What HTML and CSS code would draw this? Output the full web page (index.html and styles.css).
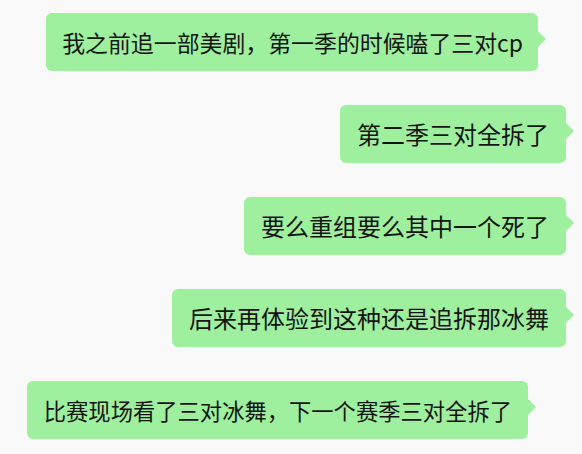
FILE: index.html
```html
<!DOCTYPE html>
<html>
<head>
<meta charset="UTF-8">
<title>聊天记录</title>
<link rel="stylesheet" href="styles.css">
</head>
<body>
<div id="chat">
    <div class="row row-mid">
        <div class="bubble size-m">我之前追一部美剧，第一季的时候嗑了三对cp</div>
    </div>
    <div class="row">
        <div class="bubble">第二季三对全拆了</div>
    </div>
    <div class="row">
        <div class="bubble">要么重组要么其中一个死了</div>
    </div>
    <div class="row">
        <div class="bubble">后来再体验到这种还是追拆那冰舞</div>
    </div>
    <div class="row row-far">
        <div class="bubble size-s">比赛现场看了三对冰舞，下一个赛季三对全拆了</div>
    </div>
</div>
</body>
</html>
```

FILE: styles.css
```css
body {
    margin: 0;
    background-color: #F9F9F9;
    font-family: "Noto Sans CJK SC", "Noto Sans", sans-serif;
}

#chat {
    display: flex;
    flex-direction: column;
    gap: 34px;
    padding-top: 13px;
}

.row {
    display: flex;
    justify-content: flex-end;
    padding-right: 16px;
}

.row-mid {
    padding-right: 44px;
}

.row-far {
    padding-right: 54px;
}

.bubble {
    position: relative;
    background-color: #9EF09E;
    color: #151515;
    border-radius: 6px;
    padding: 12px 17px;
    font-size: 24px;
    line-height: 34px;
    white-space: nowrap;
}

.size-m {
    font-size: 22.9px;
    padding: 12px 15px 12px 16px;
}

.size-s {
    font-size: 22.3px;
    padding: 12px 16px 12px 17px;
}

/* little tail on the right side */
.bubble:after {
    content: "";
    position: absolute;
    right: -8px;
    top: 18px;
    border-left: 8px solid #9EF09E;
    border-top: 8px solid transparent;
    border-bottom: 8px solid transparent;
}
```
